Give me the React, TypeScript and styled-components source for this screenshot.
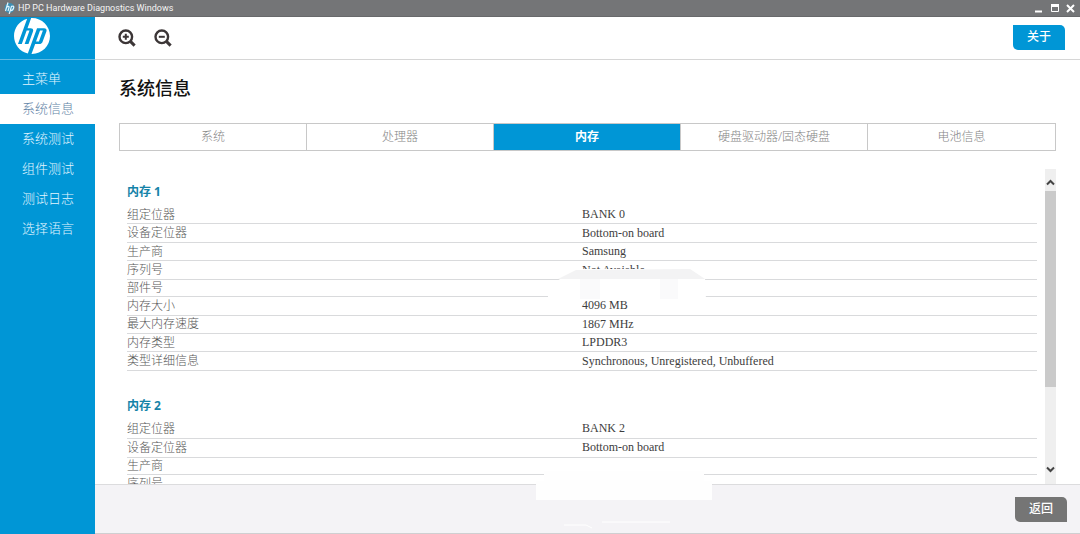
import React from "react";
import styled, { createGlobalStyle } from "styled-components";
import { SiHp } from "react-icons/si";

const blue = "#0096d6";
const cjk = `"Noto Sans CJK SC", sans-serif`;

const GlobalStyle = createGlobalStyle`
  * { box-sizing: border-box; }
  body { margin: 0; background: #fff; font-family: "Open Sans", ${cjk}; font-size: 12px; }
  button { font-family: inherit; cursor: pointer; }
`;

const Window = styled.div`
  display: grid;
  grid-template-rows: 17px minmax(0, 1fr);
  height: 100vh;
`;

const TitleBar = styled.header`
  display: flex;
  align-items: center;
  gap: 3px;
  padding: 0 3px 0 4px;
  background: #747577;
  border-bottom: 1px solid #68696b;
  color: #f4f4f4;
`;

const WindowTitle = styled.span`
  flex: 1;
  font-family: Roboto, sans-serif;
  font-size: 9px;
  line-height: 14px;
`;

const WindowButton = styled.button`
  display: flex;
  width: 13px;
  height: 14px;
  padding: 0;
  align-items: center;
  justify-content: center;
  border: 0;
  background: none;
  color: #fff;
`;

const Body = styled.div`
  display: grid;
  grid-template-columns: 95px minmax(0, 1fr);
  min-height: 0;
`;

const Sidebar = styled.aside`
  background: ${blue};
`;

const Logo = styled.div`
  height: 43px;
  padding: 1px 14px;
  border-bottom: 1px solid #5fb9e2;
  color: #fff;
`;

const Nav = styled.nav`
  display: flex;
  flex-direction: column;
  padding-top: 4px;
`;

const NavLink = styled.a<{ $active?: boolean }>`
  height: 30px;
  padding-left: 22px;
  line-height: 29px;
  font-size: 13px;
  font-weight: 300;
  text-decoration: none;
  color: ${(p) => (p.$active ? "#5f83a6" : "#e2f5ff")};
  background: ${(p) => (p.$active ? "#fff" : "transparent")};
`;

const Main = styled.main`
  display: grid;
  grid-template-rows: 43px minmax(0, 1fr) 50px;
  min-height: 0;
`;

const Toolbar = styled.div`
  display: flex;
  align-items: center;
  gap: 16px;
  padding: 0 15px 2px 22px;
  border-bottom: 1px solid #d6d6d6;
`;

const IconButton = styled.button`
  display: flex;
  padding: 2px 0 0;
  border: 0;
  background: none;
  color: #3c3637;
`;

const ActionButton = styled.button<{ $tone: string }>`
  width: 52px;
  height: 25px;
  margin-left: auto;
  padding: 0;
  border: 0;
  border-radius: 0 5px 0 5px;
  background: ${(p) => p.$tone};
  color: #fff;
  font-size: 12px;
  font-weight: 500;
  line-height: 24px;
`;

const Content = styled.section`
  display: flex;
  flex-direction: column;
  min-height: 0;
  padding: 15px 24px 0;
`;

const PageTitle = styled.h1`
  margin: 0 0 22px;
  color: #111;
  font-size: 18px;
  font-weight: 500;
  line-height: 26px;
`;

const Tabs = styled.div`
  display: grid;
  flex: none;
  grid-template-columns: repeat(5, 1fr);
  height: 28px;
  border: 1px solid #c8c8c8;
`;

const Tab = styled.button<{ $active?: boolean }>`
  padding: 0;
  border: 0;
  border-right: 1px solid #c8c8c8;
  background: ${(p) => (p.$active ? blue : "#fff")};
  color: ${(p) => (p.$active ? "#fff" : "#858585")};
  font-size: 12px;
  font-weight: ${(p) => (p.$active ? 700 : 300)};
  line-height: 24px;
  &:last-child { border-right: 0; }
`;

const Viewport = styled.div`
  display: flex;
  flex: 1;
  min-height: 0;
  margin-top: 18px;
`;

const Records = styled.div`
  flex: 1;
  padding: 11px 8px 0;
  overflow: hidden;
`;

const Record = styled.section`
  margin-bottom: 23px;
`;

const RecordTitle = styled.h2`
  margin: 0 0 2px;
  color: #1583a8;
  font-size: 12px;
  font-weight: 700;
  line-height: 24px;
`;

const Table = styled.table<{ $height: number }>`
  width: 100%;
  height: ${(p) => p.$height}px;
  table-layout: fixed;
  border-collapse: separate;
  border-spacing: 0;
  line-height: 16px;
`;

const Label = styled.th`
  padding: 0;
  border-bottom: 1px solid #d9dadc;
  color: #585858;
  font-weight: 300;
  text-align: left;
`;

const Value = styled.td`
  position: relative;
  padding: 0 0 1px;
  border-bottom: 1px solid #d9dadc;
  color: #3d3d3d;
  font-family: "Liberation Serif", ${cjk};
`;

const Redaction = styled.svg`
  position: absolute;
  top: 8px;
  left: -34px;
  z-index: 1;
`;

const ScrollTrack = styled.div`
  display: flex;
  flex-direction: column;
  width: 11px;
  padding-bottom: 6px;
  background: #efefef;
`;

const ScrollButton = styled.button`
  display: flex;
  height: 22px;
  padding: 4px 0 0;
  align-items: center;
  justify-content: center;
  border: 0;
  background: none;
  color: #444;
`;

const ScrollRoom = styled.div`
  flex: 1;
`;

const ScrollThumb = styled.div`
  height: 74%;
  background: #cacaca;
`;

const Footer = styled.footer`
  position: relative;
  display: flex;
  align-items: center;
  padding: 0 13px 0 0;
  border-top: 1px solid #dcdcde;
  border-bottom: 1px solid #cfcfd1;
  background: #f4f3f6;
`;

const FooterPatch = styled.svg`
  position: absolute;
  bottom: 4px;
  left: 441px;
`;

const navItems = ["主菜单", "系统信息", "系统测试", "组件测试", "测试日志", "选择语言"];
const tabs = ["系统", "处理器", "内存", "硬盘驱动器/固态硬盘", "电池信息"];

type Field = { label: string; value?: string; redacted?: boolean };

const memory: { title: string; height: number; fields: Field[] }[] = [
  {
    title: "内存 1",
    height: 165,
    fields: [
      { label: "组定位器", value: "BANK 0" },
      { label: "设备定位器", value: "Bottom-on board" },
      { label: "生产商", value: "Samsung" },
      { label: "序列号", value: "Not Avaiable", redacted: true },
      { label: "部件号" },
      { label: "内存大小", value: "4096 MB" },
      { label: "最大内存速度", value: "1867 MHz" },
      { label: "内存类型", value: "LPDDR3" },
      { label: "类型详细信息", value: "Synchronous, Unregistered, Unbuffered" },
    ],
  },
  {
    title: "内存 2",
    height: 73,
    fields: [
      { label: "组定位器", value: "BANK 2" },
      { label: "设备定位器", value: "Bottom-on board" },
      { label: "生产商" },
      { label: "序列号" },
    ],
  },
];

function Magnifier({ plus }: { plus?: boolean }) {
  return (
    <svg width="20" height="20" viewBox="0 0 20 20" fill="none" stroke="currentColor" aria-hidden="true">
      <circle cx="8.8" cy="8.8" r="6.3" strokeWidth="2.4" />
      <path d="M13.4 13.4 L17.6 17.6" strokeWidth="3" />
      <path d={plus ? "M5.8 8.8h6M8.8 5.8v6" : "M5.8 8.8h6"} strokeWidth="2" />
    </svg>
  );
}

function Chevron({ down }: { down?: boolean }) {
  return (
    <svg width="9" height="7" viewBox="0 0 9 7" fill="none" stroke="currentColor" strokeWidth="2" aria-hidden="true">
      <path d={down ? "M1 1.5 L4.5 5 L8 1.5" : "M1 5.5 L4.5 2 L8 5.5"} />
    </svg>
  );
}

export default function App() {
  return (
    <>
      <GlobalStyle />
      <Window>
        <TitleBar>
          <svg width="11" height="12" viewBox="0 0 11 12" fill="none" aria-hidden="true">
            <circle cx="5.5" cy="6" r="5" fill="#3d8fb5" />
            <path d="M4 0.5 L1.5 9 M2.8 5 Q5.5 3.4 5 5.6 L4 9 M7.6 3.8 L5.2 12 M7.4 4.5 Q10.4 3.2 9.6 6 Q8.8 9 6.2 8.5" stroke="#dff5ff" strokeWidth="1.2" />
          </svg>
          <WindowTitle>HP PC Hardware Diagnostics Windows</WindowTitle>
          <WindowButton aria-label="最小化">
            <svg width="7" height="9" viewBox="0 0 7 9"><path d="M0 7.5h7" stroke="currentColor" strokeWidth="2" /></svg>
          </WindowButton>
          <WindowButton aria-label="最大化">
            <svg width="8" height="8" viewBox="0 0 8 8" fill="none" stroke="currentColor">
              <path d="M0.5 1v6.5h7V1" />
              <path d="M0 1.5h8" strokeWidth="3" />
            </svg>
          </WindowButton>
          <WindowButton aria-label="关闭">
            <svg width="9" height="9" viewBox="0 0 9 9" stroke="currentColor" strokeWidth="2"><path d="M1 1l7 7M8 1l-7 7" /></svg>
          </WindowButton>
        </TitleBar>
        <Body>
          <Sidebar>
            <Logo><SiHp size={36} title="HP" /></Logo>
            <Nav>
              {navItems.map((item, i) => (
                <NavLink key={item} href="#" $active={i === 1}>{item}</NavLink>
              ))}
            </Nav>
          </Sidebar>
          <Main>
            <Toolbar>
              <IconButton aria-label="放大"><Magnifier plus /></IconButton>
              <IconButton aria-label="缩小"><Magnifier /></IconButton>
              <ActionButton $tone={blue}>关于</ActionButton>
            </Toolbar>
            <Content>
              <PageTitle>系统信息</PageTitle>
              <Tabs role="tablist">
                {tabs.map((tab, i) => (
                  <Tab key={tab} role="tab" aria-selected={i === 2} $active={i === 2}>{tab}</Tab>
                ))}
              </Tabs>
              <Viewport>
                <Records>
                  {memory.map((bank) => (
                    <Record key={bank.title}>
                      <RecordTitle>{bank.title}</RecordTitle>
                      <Table $height={bank.height}>
                        <tbody>
                          {bank.fields.map((f) => (
                            <tr key={f.label}>
                              <Label scope="row">{f.label}</Label>
                              <Value>
                                {f.value}
                                {f.redacted && (
                                  <Redaction width="158" height="31" viewBox="0 0 158 31" aria-hidden="true">
                                    <path d="M12 10 L28 0 H142 L157 9 L158 31 H0 V18 Z" fill="#fff" />
                                    <path d="M10 10 L28 1 L142 0 L157 10 Z" fill="#f3f3f4" />
                                    <path d="M32 10h20v20h-20zM112 10h18v20h-18z" fill="#fafafb" />
                                  </Redaction>
                                )}
                              </Value>
                            </tr>
                          ))}
                        </tbody>
                      </Table>
                    </Record>
                  ))}
                </Records>
                <ScrollTrack>
                  <ScrollButton aria-label="向上滚动"><Chevron /></ScrollButton>
                  <ScrollRoom><ScrollThumb /></ScrollRoom>
                  <ScrollButton aria-label="向下滚动"><Chevron down /></ScrollButton>
                </ScrollTrack>
              </Viewport>
            </Content>
            <Footer>
              <FooterPatch width="176" height="58" viewBox="0 0 176 58" aria-hidden="true">
                <path d="M8 0H168V10H176V29H0V10H8Z" fill="#fefefe" />
                <path d="M28 54h22l6 3M66 51h68" fill="none" stroke="#fff" />
              </FooterPatch>
              <ActionButton $tone="#757575">返回</ActionButton>
            </Footer>
          </Main>
        </Body>
      </Window>
    </>
  );
}
